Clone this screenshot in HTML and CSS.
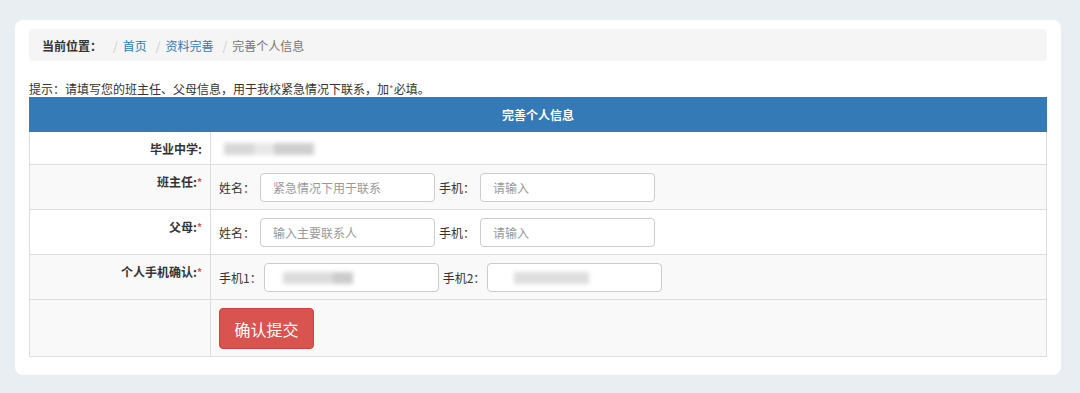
FILE: index.html
```html
<!DOCTYPE html>
<html lang="zh-CN">
<head>
    <meta charset="UTF-8">
    <title>完善个人信息</title>
    <link rel="stylesheet" href="styles.css">
</head>
<body>
    <div class="panel">
        <div class="crumbs">
            <span class="crumbs-title">当前位置：</span>
            <span class="sep">/</span>
            <a class="crumb-link">首页</a>
            <span class="sep">/</span>
            <a class="crumb-link">资料完善</a>
            <span class="sep">/</span>
            <span class="crumb-here">完善个人信息</span>
        </div>

        <div class="hint">提示：请填写您的班主任、父母信息，用于我校紧急情况下联系，加<span class="req">*</span>必填。</div>

        <table class="info-table">
            <tr class="head">
                <th colspan="2">完善个人信息</th>
            </tr>
            <tr>
                <td class="label">毕业中学:</td>
                <td class="value"><div class="masked"><i class="m1"></i><i class="m2"></i><i class="m3"></i></div></td>
            </tr>
            <tr class="alt">
                <td class="label">班主任:<span class="req">*</span></td>
                <td class="value">
                    <div class="field-row">
                        <span class="fl">姓名：</span>
                        <input class="field" placeholder="紧急情况下用于联系">
                        <span class="fl">手机：</span>
                        <input class="field" placeholder="请输入">
                    </div>
                </td>
            </tr>
            <tr>
                <td class="label">父母:<span class="req">*</span></td>
                <td class="value">
                    <div class="field-row">
                        <span class="fl">姓名：</span>
                        <input class="field" placeholder="输入主要联系人">
                        <span class="fl">手机：</span>
                        <input class="field" placeholder="请输入">
                    </div>
                </td>
            </tr>
            <tr class="alt">
                <td class="label">个人手机确认:<span class="req">*</span></td>
                <td class="value">
                    <div class="field-row">
                        <span class="fl">手机1：</span>
                        <div class="field filled"><div class="masked in-field"><i class="m4"></i><i class="m5"></i></div></div>
                        <span class="fl">手机2：</span>
                        <div class="field filled"><div class="masked in-field"><i class="m6"></i></div></div>
                    </div>
                </td>
            </tr>
            <tr class="alt">
                <td class="label"></td>
                <td class="value"><button class="btn-submit">确认提交</button></td>
            </tr>
        </table>
    </div>
</body>
</html>
```

FILE: styles.css
```css
body {
    margin: 0;
    padding: 20px 19px 19px 15px;
    background-color: #e8eef1;
    font-family: "Microsoft YaHei", "Noto Sans CJK SC", sans-serif;
    font-size: 12px;
    color: #333;
}
.panel {
    background: #fff;
    border-radius: 8px;
    padding: 9px 14px 18px 14px;
}
.crumbs {
    background: #f5f5f5;
    border-radius: 4px;
    height: 32px;
    display: flex;
    align-items: center;
    padding: 0 13px;
    color: #777;
}
.crumbs-title {
    font-weight: bold;
    color: #333;
    margin-right: 6px;
}
.sep {
    color: #ccc;
    padding: 0 5px;
}
.crumb-link {
    color: #337ab7;
    margin-right: 4px;
}
.crumb-here {
    color: #777;
}
.hint {
    margin-top: 19px;
    line-height: 17px;
}
.req {
    color: #d9534f;
    font-size: 10px;
    vertical-align: top;
}
.info-table {
    width: 100%;
    border-collapse: collapse;
}
.info-table th {
    background: #337ab7;
    color: #fff;
    height: 33px;
    padding: 0;
    font-weight: bold;
    border: 1px solid #337ab7;
}
.info-table td {
    border: 1px solid #ddd;
    padding: 8px 8px 7px 8px;
    vertical-align: top;
    line-height: 17px;
}
.info-table tr.alt td {
    background: #f9f9f9;
}
.info-table td.label {
    width: 164px;
    text-align: right;
    font-weight: bold;
}
.field-row {
    display: flex;
    align-items: center;
}
.fl {
    color: #333;
    margin-right: 5px;
}
.field {
    box-sizing: border-box;
    width: 175px;
    height: 29px;
    border: 1px solid #ccc;
    border-radius: 4px;
    background: #fff;
    padding: 0 12px;
    font-family: inherit;
    font-size: 12px;
    margin-right: 4px;
}
.field::placeholder {
    color: #999;
}
.filled {
    margin-left: -3px;
}
.masked {
    display: flex;
    filter: blur(2px);
    height: 17px;
    align-items: center;
}
.masked i {
    display: block;
    height: 12px;
}
.m1 { width: 30px; background: #d8d8d8; margin-left: 5px; }
.m2 { width: 20px; background: #e8e8e8; }
.m3 { width: 40px; background: #cfcfcf; }
.in-field {
    height: 27px;
    margin-left: 6px;
}
.m4 { width: 50px; background: #dcdcdc; }
.m5 { width: 20px; background: #cccccc; }
.m6 { width: 75px; background: #dedede; margin-left: 8px; }
.btn-submit {
    background: #d9534f;
    color: #fff;
    border: 1px solid #d43f3a;
    border-radius: 4px;
    font-family: inherit;
    font-size: 16px;
    width: 95px;
    height: 41px;
    padding: 0;
}
```
